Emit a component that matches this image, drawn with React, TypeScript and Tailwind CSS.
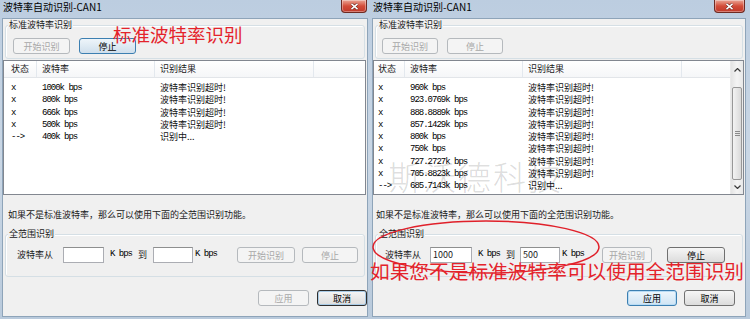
import React from 'react';

type BtnKind = 'disabled' | 'normal' | 'hot' | 'default' | 'focus';
type Row = [string, string, string];

const btnStyle: Record<BtnKind, string> = {
  disabled: 'border-[#b5b9bd] bg-[#f4f4f4] text-[#a8a8a8]',
  normal: 'border-[#707070] bg-gradient-to-b from-[#f6f6f6] to-[#dcdcdc] text-black',
  hot: 'border-[#3c7fb1] bg-gradient-to-b from-[#eef5fa] to-[#cfdfec] text-black',
  default: 'border-[#2e2e2e] bg-gradient-to-b from-[#f6f6f6] to-[#dcdcdc] text-black shadow-[inset_0_0_0_1px_#a9cbe6]',
  focus: 'border-[#3c7fb1] bg-gradient-to-b from-[#eef6fc] to-[#cfe4f4] text-black shadow-[inset_0_0_0_1px_#b9dcf5]',
};

const leftRows: Row[] = [
  ['x', '1000k bps', '波特率识别超时!'],
  ['x', '800k bps', '波特率识别超时!'],
  ['x', '666k bps', '波特率识别超时!'],
  ['x', '500k bps', '波特率识别超时!'],
  ['-->', '400k bps', '识别中...'],
];

const rightRows: Row[] = [
  ['x', '960k bps', '波特率识别超时!'],
  ['x', '923.0769k bps', '波特率识别超时!'],
  ['x', '888.8889k bps', '波特率识别超时!'],
  ['x', '857.1429k bps', '波特率识别超时!'],
  ['x', '800k bps', '波特率识别超时!'],
  ['x', '750k bps', '波特率识别超时!'],
  ['x', '727.2727k bps', '波特率识别超时!'],
  ['x', '705.8823k bps', '波特率识别超时!'],
  ['-->', '685.7143k bps', '识别中...'],
];

const mono = "font-['Liberation_Mono',monospace] text-[9px] tracking-[-1px] text-black";

function Btn({ label, w, kind }: { label: string; w: string; kind: BtnKind }) {
  return (
    <div
      className={`${w} h-[16px] shrink-0 rounded-[3px] border flex items-center justify-center text-[9px] leading-none ${btnStyle[kind]}`}
    >
      {label}
    </div>
  );
}

function Input({ w, value }: { w: string; value: string }) {
  return (
    <div
      className={`${w} h-[16px] shrink-0 bg-white border border-[#abadb3] border-t-[#8e8f8f] text-[9px] leading-[14px] pl-[2px]`}
    >
      {value}
    </div>
  );
}

function Group({ label, className, children }: { label: string; className: string; children: React.ReactNode }) {
  return (
    <div
      className={`relative mx-[2px] shrink-0 border border-[#d5dfe5] rounded-[3px] shadow-[inset_1px_1px_0_#fff] ${className}`}
    >
      <span className="absolute -top-[7px] left-[2px] bg-[#f0f0f0] px-[1px] text-[9px] leading-[12px] text-[#1a1a1a]">
        {label}
      </span>
      {children}
    </div>
  );
}

function CloseBtn({ w }: { w: string }) {
  return (
    <div
      className={`${w} h-[13px] rounded-b-[4px] border border-t-0 border-[#6e2a22] bg-gradient-to-b from-[#e9a596] via-[#d34c39] to-[#c0392a] flex items-center justify-center shadow-[inset_0_0_0_1px_rgba(255,255,255,0.35)]`}
    >
      <svg width="9" height="7" viewBox="0 0 9 7">
        <path d="M1.5 0.8 L7.5 6.2 M7.5 0.8 L1.5 6.2" stroke="#5a1a14" strokeWidth="2.6" />
        <path d="M1.5 0.8 L7.5 6.2 M7.5 0.8 L1.5 6.2" stroke="#fff" strokeWidth="1.6" />
      </svg>
    </div>
  );
}

function ScrollBar() {
  return (
    <div className="w-[13px] shrink-0 flex flex-col bg-gradient-to-r from-[#e4e4e4] via-[#f4f4f4] to-[#e8e8e8] border-l border-[#eaeaea]">
      <div className="h-[17px] flex items-center justify-center">
        <svg width="7" height="4" viewBox="0 0 7 4">
          <path d="M0.5 3.5 L3.5 0.5 L6.5 3.5" fill="none" stroke="#3a3a3a" strokeWidth="1.2" />
        </svg>
      </div>
      <div className="mt-[9px] mx-[1px] h-[93px] rounded-[2px] border border-[#979797] bg-gradient-to-r from-[#f3f3f3] to-[#d9d9d9] flex items-center justify-center">
        <div className="flex flex-col gap-[1px]">
          <div className="w-[5px] h-[1px] bg-[#8a8a8a]" />
          <div className="w-[5px] h-[1px] bg-[#8a8a8a]" />
          <div className="w-[5px] h-[1px] bg-[#8a8a8a]" />
        </div>
      </div>
      <div className="flex-1 flex items-end justify-center pb-[5px]">
        <svg width="7" height="4" viewBox="0 0 7 4">
          <path d="M0.5 0.5 L3.5 3.5 L6.5 0.5" fill="none" stroke="#3a3a3a" strokeWidth="1.2" />
        </svg>
      </div>
    </div>
  );
}

function ListView({ rows, c1, scroll, children }: { rows: Row[]; c1: string; scroll?: boolean; children?: React.ReactNode }) {
  return (
    <div className="relative mt-[1px] mr-[1px] h-[135px] shrink-0 bg-white border border-[#828790] flex overflow-hidden">
      <div className="flex-1 flex flex-col min-w-0">
        <div className="h-[17px] shrink-0 flex border-b border-[#e2e5e9] bg-gradient-to-b from-white to-[#f5f6f8] text-[9px] text-[#1a1a1a]">
          <div className={`${c1} shrink-0 flex items-center border-r border-[#e3e8ee]`}>状态</div>
          <div className="w-[118px] shrink-0 pl-[5px] flex items-center border-r border-[#e3e8ee]">波特率</div>
          <div className="w-[159px] shrink-0 pl-[5px] flex items-center border-r border-[#e3e8ee]">识别结果</div>
          <div className="flex-1" />
        </div>
        <div className="pt-[4px]">
          {rows.map((r, i) => (
            <div key={i} className="h-[12.25px] flex text-[9px] leading-[12.25px] overflow-visible">
              <div className={`${c1} shrink-0 ${mono}`}>{r[0]}</div>
              <div className={`w-[118px] shrink-0 pl-[5px] ${mono}`}>{r[1]}</div>
              <div className="w-[159px] shrink-0 pl-[5px] text-[#111]">{r[2]}</div>
            </div>
          ))}
        </div>
      </div>
      {scroll && <ScrollBar />}
      {children}
    </div>
  );
}

type Cfg = {
  w: string;
  pr: string;
  closeW: string;
  g1: string;
  g1w: string;
  stop: BtnKind;
  c1: string;
  note: string;
  lab: string;
  in1: string;
  v1: string;
  mid: string;
  in2: string;
  v2: string;
  b1: string;
  b1w: string;
  b2: string;
  b2w: string;
  stop2: BtnKind;
  bottom: string;
  applyW: string;
  apply: BtnKind;
  cancelW: string;
  cancel: BtnKind;
  scroll: boolean;
};

const leftCfg: Cfg = {
  w: 'w-[370px]', pr: 'pr-[3px]', closeW: 'w-[26px]',
  g1: 'pl-[7px]', g1w: 'w-[57px]', stop: 'hot',
  c1: 'w-[33px] pl-[7px]', note: 'pl-[5px]',
  lab: 'ml-[11px] w-[46px]', in1: 'w-[41px]', v1: '', mid: 'ml-[6px] w-[43px]', in2: 'w-[40px]', v2: '',
  b1: 'ml-[20px]', b1w: 'w-[58px]', b2: 'ml-[7px]', b2w: 'w-[56px]', stop2: 'disabled',
  bottom: 'pr-0 gap-[8px]', applyW: 'w-[51px]', apply: 'disabled', cancelW: 'w-[50px]', cancel: 'default',
  scroll: false,
};

const rightCfg: Cfg = {
  w: 'w-[380px]', pr: 'pr-[5px]', closeW: 'w-[31px]',
  g1: 'pl-[6px]', g1w: 'w-[56px]', stop: 'disabled',
  c1: 'w-[31px] pl-[4px]', note: 'pl-[3px]',
  lab: 'ml-[9px] w-[45px]', in1: 'w-[42px]', v1: '1000', mid: 'ml-[6px] w-[42px]', in2: 'w-[40px]', v2: '500',
  b1: 'ml-[18px]', b1w: 'w-[50px]', b2: 'ml-[15px]', b2w: 'w-[58px]', stop2: 'normal',
  bottom: 'pr-[10px] gap-[7px]', applyW: 'w-[50px]', apply: 'focus', cancelW: 'w-[51px]', cancel: 'normal',
  scroll: true,
};

function Dialog({ cfg, watermark, children }: { cfg: Cfg; watermark?: boolean; children?: React.ReactNode }) {
  return (
    <div
      className={`relative shrink-0 flex flex-col h-[319px] pl-[3px] pb-[3px] bg-gradient-to-b from-[#bccde0] via-[#cad7e5] to-[#b9cadc] ${cfg.w} ${cfg.pr}`}
    >
      <div className="h-[19px] shrink-0 flex items-start justify-between">
        <span className="text-[10px] leading-[14px] text-black">波特率自动识别-CAN1</span>
        <CloseBtn w={cfg.closeW} />
      </div>
      <div className="flex-1 bg-[#f0f0f0] flex flex-col ring-1 ring-[#8ea4b9]">
        <Group label="标准波特率识别" className="mt-[6px] h-[34px]">
          <div className={`flex pt-[12px] gap-[9px] ${cfg.g1}`}>
            <Btn label="开始识别" w={cfg.g1w} kind="disabled" />
            <Btn label="停止" w={cfg.g1w} kind={cfg.stop} />
          </div>
        </Group>
        <ListView rows={watermark ? rightRows : leftRows} c1={cfg.c1} scroll={cfg.scroll}>
          {watermark && (
            <div className="absolute left-[14px] top-[97px] text-[33px] leading-[36px] tracking-[2px] font-light text-black/15 whitespace-nowrap">
              斯沃德科技
            </div>
          )}
        </ListView>
        <p className={`mt-[14px] text-[9px] leading-[12px] text-[#1a1a1a] ${cfg.note}`}>
          如果不是标准波特率，那么可以使用下面的全范围识别功能。
        </p>
        <Group label="全范围识别" className="mt-[13px] h-[43px]">
          <div className="flex items-center pt-[12px] text-[9px] text-[#1a1a1a]">
            <span className={`${cfg.lab} shrink-0`}>波特率从</span>
            <Input w={cfg.in1} value={cfg.v1} />
            <span className={`${cfg.mid} shrink-0 flex items-center`}>
              <span className={mono}>K bps</span>
              <span className="ml-[6px]">到</span>
            </span>
            <Input w={cfg.in2} value={cfg.v2} />
            <span className={`ml-[2px] shrink-0 ${mono}`}>K bps</span>
            <div className={cfg.b1}>
              <Btn label="开始识别" w={cfg.b1w} kind="disabled" />
            </div>
            <div className={cfg.b2}>
              <Btn label="停止" w={cfg.b2w} kind={cfg.stop2} />
            </div>
          </div>
        </Group>
        <div className={`mt-[13px] flex justify-end ${cfg.bottom}`}>
          <Btn label="应用" w={cfg.applyW} kind={cfg.apply} />
          <Btn label="取消" w={cfg.cancelW} kind={cfg.cancel} />
        </div>
      </div>
      {children}
    </div>
  );
}

export default function App() {
  return (
    <div className="w-[750px] h-[319px] flex overflow-hidden bg-[#c7d6e5] font-['Noto_Sans_CJK_SC','Noto_Sans',sans-serif]">
      <Dialog cfg={leftCfg}>
        <div className="absolute left-[113px] top-[24px] text-[18.5px] leading-[20px] text-[#e4232b] whitespace-nowrap">
          标准波特率识别
        </div>
      </Dialog>
      <Dialog cfg={rightCfg} watermark>
        <svg className="absolute left-0 top-[216px]" width="240" height="62" viewBox="0 0 240 62">
          <ellipse cx="116" cy="31" rx="113" ry="26" fill="none" stroke="#e0202a" strokeWidth="1.5" />
        </svg>
        <div className="absolute left-0 top-[261px] text-[19.7px] leading-[20px] text-[#e4232b] whitespace-nowrap">
          如果您不是标准波特率可以使用全范围识别
        </div>
      </Dialog>
    </div>
  );
}
